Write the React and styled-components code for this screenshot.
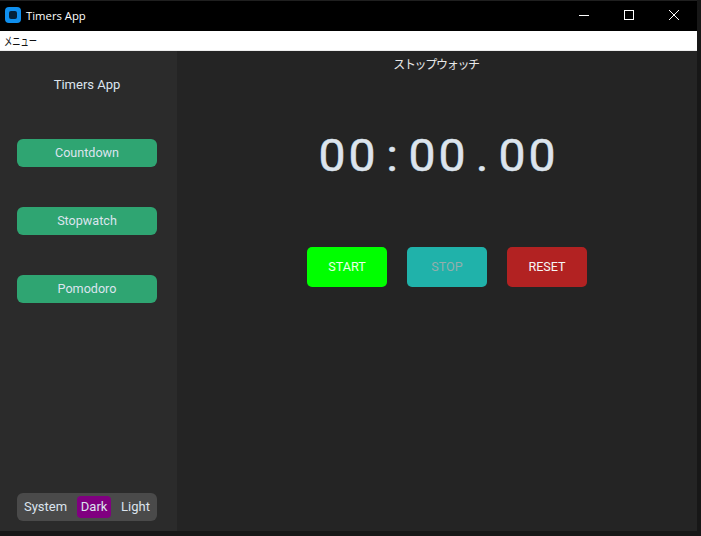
import styled, { createGlobalStyle } from 'styled-components';

const Global = createGlobalStyle`
	html, body {
		margin: 0;
		height: 100%;
		background: #1b1b1b;
	}
	#root {
		height: 100%;
	}
`;

const Page = styled.div`
	width: 701px;
	height: 536px;
	overflow: hidden;
	box-sizing: border-box;
	padding: 0 4px 5px 0;
	background: #171717;
	font-family: Roboto, 'Liberation Sans', sans-serif;
`;

const Window = styled.div`
	height: 100%;
	display: flex;
	flex-direction: column;
`;

const TitleBar = styled.header`
	height: 31px;
	flex: none;
	box-sizing: border-box;
	border-top: 1px solid #1f1f1f;
	padding: 0 0 2px 5px;
	background: #000;
	display: flex;
	align-items: center;
	color: #fff;
	font: 11.3px 'Open Sans', 'Liberation Sans', sans-serif;
`;

const AppName = styled.span`
	margin-left: 5px;
	flex: 1;
`;

const WindowControls = styled.div`
	display: flex;
	height: 100%;
	margin-right: 1px;
`;

const WindowControl = styled.button`
	width: 45px;
	height: 100%;
	padding: 0;
	border: 0;
	background: transparent;
	display: flex;
	align-items: center;
	justify-content: center;
`;

const MenuBar = styled.nav`
	height: 20px;
	flex: none;
	box-sizing: border-box;
	border-bottom: 1px solid #ececec;
	background: #fff;
	color: #111;
	padding-left: 4px;
	font: 12px/19px 'Noto Sans CJK JP', sans-serif;
`;

const MenuLabel = styled.span`
	display: inline-block;
	transform: scaleX(0.69);
	transform-origin: left center;
`;

const Body = styled.div`
	flex: 1;
	min-height: 0;
	display: flex;
`;

const Sidebar = styled.aside`
	width: 177px;
	flex: none;
	box-sizing: border-box;
	padding: 0 20px 0 17px;
	background: #2b2b2b;
	display: flex;
	flex-direction: column;
`;

const SidebarTitle = styled.h1`
	margin: 25px 0 45px;
	font-size: 13px;
	font-weight: 400;
	line-height: 18px;
	text-align: center;
	color: #dce4ee;
`;

const NavList = styled.div`
	display: flex;
	flex-direction: column;
	gap: 40px;
`;

const NavButton = styled.button`
	height: 28px;
	padding: 0 0 2px;
	border: 0;
	border-radius: 6px;
	background: #2fa572;
	color: #dce4ee;
	font: 12.6px Roboto, sans-serif;
`;

const ModeSwitch = styled.div`
	margin-top: auto;
	margin-bottom: 10px;
	height: 28px;
	box-sizing: border-box;
	padding: 3px 3px;
	border-radius: 6px;
	background: #4a4a4a;
	display: flex;
	justify-content: space-between;
	align-items: stretch;
`;

const ModeOption = styled.span`
	padding: 0 4px;
	border-radius: 4px;
	background: ${(p) => (p.$active ? '#800080' : 'transparent')};
	color: #dce4ee;
	font-size: 13px;
	line-height: 22px;
`;

const Main = styled.main`
	flex: 1;
	min-width: 0;
	background: #242424;
	display: flex;
	flex-direction: column;
	align-items: center;
`;

const PanelTitle = styled.h2`
	margin: 3px 0 0;
	padding-right: 2px;
	font: 400 12px/20px 'Noto Sans CJK JP', sans-serif;
	letter-spacing: -1.3px;
	color: #e8e8e8;
`;

const Clock = styled.div`
	margin-top: 50px;
	display: flex;
	font-size: 45px;
	font-weight: 400;
	line-height: 64px;
	color: #dce4ee;
	-webkit-text-stroke: 0.5px #dce4ee;
`;

const ClockChar = styled.span`
	width: 30px;
	text-align: center;
	transform: scaleX(1.07);
`;

const TimerActions = styled.div`
	margin: 59px 0 0 20px;
	display: flex;
	gap: 20px;
`;

const TimerButton = styled.button`
	width: 80px;
	height: 40px;
	padding: 0 0 2px;
	border: 0;
	border-radius: 5px;
	background: ${(p) => p.$bg};
	color: ${(p) => p.$fg};
	font: 12.6px Roboto, sans-serif;
`;

function AppIcon() {
	return (
		<svg width="16" height="16" viewBox="0 0 16 16">
			<rect width="16" height="16" rx="4" fill="#0f8fee" />
			<rect x="4" y="4" width="8" height="8" rx="2" fill="#04223a" />
		</svg>
	);
}

function App() {
	return (
		<Page>
			<Global />
			<Window>
				<TitleBar>
					<AppIcon />
					<AppName>Timers App</AppName>
					<WindowControls>
						<WindowControl aria-label="minimize">
							<svg width="10" height="10" viewBox="0 0 10 10">
								<path d="M0 5.5h10" stroke="#fff" />
							</svg>
						</WindowControl>
						<WindowControl aria-label="maximize">
							<svg width="10" height="10" viewBox="0 0 10 10">
								<rect x=".5" y=".5" width="9" height="9" fill="none" stroke="#fff" />
							</svg>
						</WindowControl>
						<WindowControl aria-label="close">
							<svg width="10" height="10" viewBox="0 0 10 10">
								<path d="M0 0l10 10M10 0L0 10" stroke="#fff" />
							</svg>
						</WindowControl>
					</WindowControls>
				</TitleBar>
				<MenuBar>
					<MenuLabel>メニュー</MenuLabel>
				</MenuBar>
				<Body>
					<Sidebar>
						<SidebarTitle>Timers App</SidebarTitle>
						<NavList>
							<NavButton>Countdown</NavButton>
							<NavButton>Stopwatch</NavButton>
							<NavButton>Pomodoro</NavButton>
						</NavList>
						<ModeSwitch>
							<ModeOption>System</ModeOption>
							<ModeOption $active>Dark</ModeOption>
							<ModeOption>Light</ModeOption>
						</ModeSwitch>
					</Sidebar>
					<Main>
						<PanelTitle>ストップウォッチ</PanelTitle>
						<Clock aria-label="00:00.00">
							{'00:00.00'.split('').map((ch, i) => (
								<ClockChar key={i}>{ch}</ClockChar>
							))}
						</Clock>
						<TimerActions>
							<TimerButton $bg="#00ff00" $fg="#eaffea">START</TimerButton>
							<TimerButton $bg="#20b2aa" $fg="#94aeac">STOP</TimerButton>
							<TimerButton $bg="#b22222" $fg="#f6f6f6">RESET</TimerButton>
						</TimerActions>
					</Main>
				</Body>
			</Window>
		</Page>
	);
}

export default App;
